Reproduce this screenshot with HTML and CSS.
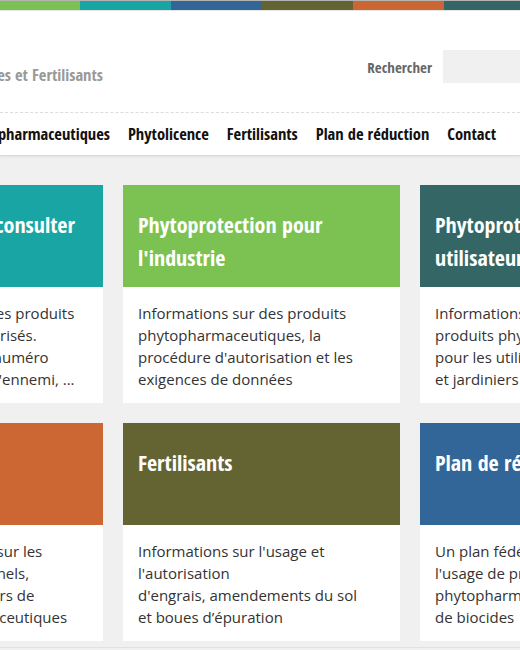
FILE: index.html
```html
<!DOCTYPE html>
<html lang="fr">
<head>
<meta charset="utf-8">
<title>Fytoweb</title>
<link rel="stylesheet" href="styles.css">
</head>
<body>
<div class="stripe">
  <span class="seg seg-green"></span>
  <span class="seg seg-teal"></span>
  <span class="seg seg-blue"></span>
  <span class="seg seg-olive"></span>
  <span class="seg seg-orange"></span>
  <span class="seg seg-dark"></span>
</div>
<header class="header">
  <div class="brand"><span class="brand-text">Produits Phytopharmaceutiques et Fertilisants</span></div>
  <div class="search">
    <label class="search-label">Rechercher</label>
    <span class="search-box"></span>
  </div>
</header>
<nav class="nav">
  <ul class="nav-list">
    <li class="nav-item">Produits phytopharmaceutiques</li>
    <li class="nav-item">Phytolicence</li>
    <li class="nav-item">Fertilisants</li>
    <li class="nav-item">Plan de réduction</li>
    <li class="nav-item">Contact</li>
  </ul>
</nav>
<main class="main">
  <div class="grid">
    <div class="card">
      <div class="card-head bg-teal"><h2 class="card-title">Produits agréés à consulter</h2></div>
      <p class="card-body">Consultez les détails des produits<br>phytos, adjuvants autorisés.<br>Recherchez par nom, numéro<br>d'autorisation, usage, l'ennemi, ...</p>
    </div>
    <div class="card">
      <div class="card-head bg-green"><h2 class="card-title">Phytoprotection pour<br>l'industrie</h2></div>
      <p class="card-body">Informations sur des produits<br>phytopharmaceutiques, la<br>procédure d'autorisation et les<br>exigences de données</p>
    </div>
    <div class="card">
      <div class="card-head bg-dark"><h2 class="card-title">Phytoprotection pour les<br>utilisateurs</h2></div>
      <p class="card-body">Informations sur des<br>produits phytopharmaceutiques<br>pour les utilisateurs professionnels<br>et jardiniers amateurs</p>
    </div>
    <div class="card">
      <div class="card-head bg-orange"><h2 class="card-title">Phytolicence</h2></div>
      <p class="card-body">Informations précises sur les<br>utilisateurs professionnels,<br>distributeurs, conseillers de<br>produits phytopharmaceutiques</p>
    </div>
    <div class="card">
      <div class="card-head bg-olive"><h2 class="card-title">Fertilisants</h2></div>
      <p class="card-body">Informations sur l'usage et<br>l'autorisation<br>d'engrais, amendements du sol<br>et boues d’épuration</p>
    </div>
    <div class="card">
      <div class="card-head bg-blue"><h2 class="card-title">Plan de réduction</h2></div>
      <p class="card-body">Un plan fédéral de réduction de<br>l'usage de produits<br>phytopharmaceutiques et<br>de biocides</p>
    </div>
  </div>
</main>
<footer class="footer"></footer>
</body>
</html>
```
FILE: styles.css
```css
html, body {
  margin: 0;
  padding: 0;
  overflow: hidden;
}
body {
  font-family: "Open Sans", "Liberation Sans", sans-serif;
  background: #f0f0f0;
  color: #333;
  width: 520px;
  height: 650px;
}
.stripe {
  display: flex;
  border-top: 1px solid #b4b4b4;
  border-bottom: 1px solid #e6e6e6;
  height: 9px;
  margin-left: -11px;
  background: #fff;
}
.seg { flex: 0 0 91px; height: 9px; }
.seg-green, .bg-green { background: #7cc253; }
.seg-teal, .bg-teal { background: #18a5a3; }
.seg-blue, .bg-blue { background: #326699; }
.seg-olive, .bg-olive { background: #646432; }
.seg-orange, .bg-orange { background: #cc6633; }
.seg-dark, .bg-dark { background: #336665; }

.header {
  background: #fff;
  height: 101px;
  display: flex;
  align-items: flex-start;
  justify-content: space-between;
}
.brand {
  width: 103px;
  display: flex;
  justify-content: flex-end;
  margin-top: 52px;
}
.brand-text {
  white-space: nowrap;
  font-family: "Open Sans Condensed", "Open Sans", sans-serif;
  font-stretch: 75%;
  font-weight: 300;
  font-size: 16.5px;
  line-height: 24px;
  color: #999;
}
.search {
  display: flex;
  align-items: center;
  margin-top: 39px;
}
.search-label {
  font-family: "Open Sans Condensed", "Open Sans", sans-serif;
  font-stretch: 75%;
  font-weight: 700;
  font-size: 15px;
  color: #666;
  margin-right: 11px;
}
.search-box {
  display: block;
  width: 77px;
  height: 33px;
  background: #f0f0f0;
}

.nav {
  background: #fff;
  border-top: 1px dashed #dcdcdc;
  border-bottom: 1px solid #dadada;
  box-shadow: 0 1px 2px rgba(0,0,0,0.06);
  height: 42px;
}
.nav-list {
  list-style: none;
  margin: 0;
  padding: 0;
  width: 496px;
  display: flex;
  justify-content: flex-end;
  gap: 18px;
  height: 42px;
  align-items: center;
}
.nav-item {
  white-space: nowrap;
  flex: none;
  font-family: "Open Sans Condensed", "Open Sans", sans-serif;
  font-stretch: 75%;
  font-weight: 700;
  font-size: 16.5px;
  line-height: 24px;
  color: #111;
}

.main {
  padding-top: 29px;
}
.grid {
  margin-left: -174px;
  display: grid;
  grid-template-columns: repeat(3, 277px);
  gap: 20px;
}
.card {
  background: #fff;
}
.card-head {
  height: 102px;
  box-sizing: border-box;
  padding: 23px 15px 0;
}
.card-title {
  margin: 0;
  white-space: nowrap;
  font-family: "Open Sans Condensed", "Open Sans", sans-serif;
  font-stretch: 75%;
  font-weight: 700;
  font-size: 22px;
  line-height: 33px;
  color: #fff;
}
.card-body {
  margin: 0;
  height: 116px;
  box-sizing: border-box;
  padding: 15px 15px 0;
  font-size: 15px;
  line-height: 22px;
  color: #333;
  white-space: nowrap;
}
.footer {
  margin-top: 6px;
  border-top: 1px solid #dde2e8;
  height: 20px;
}
```
